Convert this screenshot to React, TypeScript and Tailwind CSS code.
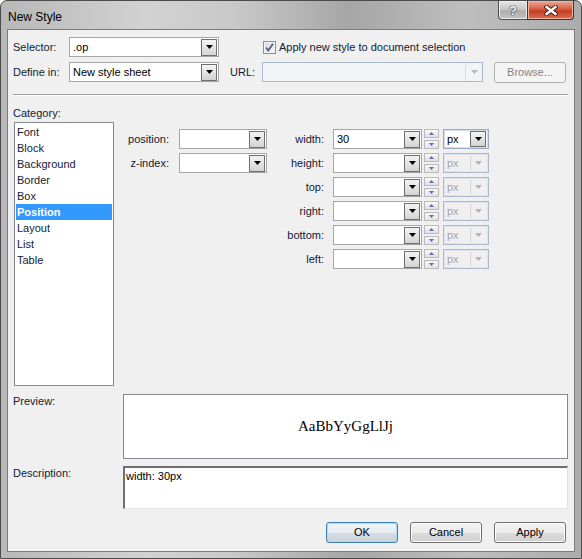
import type { ReactNode } from 'react';

const FONT = "font-['Liberation_Sans',Arial,sans-serif]";

function DownArrow({ color = '#000' }: { color?: string }) {
  return (
    <svg width="7" height="4" viewBox="0 0 7 4">
      <path d="M0 0h7L3.5 4z" fill={color} />
    </svg>
  );
}

function Combo({ className, value }: { className: string; value?: string }) {
  return (
    <div className={`flex h-[20px] items-center border border-[#a5a5a5] bg-white ${className}`}>
      <span className="flex-1 truncate pl-[3px] text-[11px] text-black">{value}</span>
      <span className="mr-[1px] flex h-[17px] w-[16px] items-center justify-center border border-[#6e6e6e] bg-gradient-to-b from-[#f4f4f4] to-[#d3d3d3]">
        <DownArrow />
      </span>
    </div>
  );
}

function DisabledCombo({ className }: { className: string }) {
  return (
    <div className={`flex h-[20px] items-stretch border border-[#abb9ce] bg-[#f2f4f7] ${className}`}>
      <span className="flex-1" />
      <span className="flex w-[17px] items-center justify-center border-l border-[#d9dee6]">
        <DownArrow color="#b9b9b9" />
      </span>
    </div>
  );
}

function UnitCombo({ enabled }: { enabled?: boolean }) {
  if (enabled) {
    return (
      <div className="ml-[4px] flex h-[20px] w-[46px] items-center border border-[#98aac6] bg-white shadow-[inset_0_0_0_1px_#d4deeb]">
        <span className="flex-1 pl-[3px] text-[11px] text-black">px</span>
        <span className="mr-[2px] flex h-[16px] w-[16px] items-center justify-center border border-[#6e6e6e] bg-gradient-to-b from-[#f4f4f4] to-[#d3d3d3]">
          <DownArrow />
        </span>
      </div>
    );
  }
  return (
    <div className="ml-[4px] flex h-[20px] w-[46px] items-stretch border border-[#a9b8cd] bg-[#f0f0f0] shadow-[inset_0_0_0_1px_#dfe5ee]">
      <span className="flex flex-1 items-center pl-[3px] text-[11px] text-[#a3a3a3]">px</span>
      <span className="my-[2px] mr-[2px] flex w-[16px] items-center justify-center border-l border-[#d5d5d5]">
        <DownArrow color="#b5b5b5" />
      </span>
    </div>
  );
}

function Spinner() {
  const half = 'flex h-[9px] w-[15px] items-center justify-center border border-[#b9b9b9] bg-gradient-to-b from-[#f8f8f8] to-[#e2e2e2]';
  return (
    <div className="ml-[2px] flex h-[20px] flex-col justify-between">
      <span className={half}>
        <svg width="5" height="3" viewBox="0 0 5 3">
          <path d="M0 3h5L2.5 0z" fill="#5b6cae" />
        </svg>
      </span>
      <span className={half}>
        <svg width="5" height="3" viewBox="0 0 5 3">
          <path d="M0 0h5L2.5 3z" fill="#5b6cae" />
        </svg>
      </span>
    </div>
  );
}

function Button({ children, primary, disabled }: { children: ReactNode; primary?: boolean; disabled?: boolean }) {
  let look =
    'border-[#707070] bg-[linear-gradient(#f2f2f2,#ebebeb_50%,#dddddd_50%,#cfcfcf)] text-black shadow-[inset_0_0_0_1px_#fbfbfb]';
  if (primary)
    look =
      'border-[#3c7fb1] bg-[linear-gradient(#eef3f6,#e6ecf0_50%,#d6dde2_50%,#cbd2d8)] text-black shadow-[inset_0_0_0_1px_#a9dcf5]';
  if (disabled) look = 'border-[#adb2b5] bg-[#f4f4f4] text-[#838383]';
  return (
    <div className={`flex h-[21px] w-[72px] items-center justify-center rounded-[3px] border text-[11px] ${look}`}>
      {children}
    </div>
  );
}

const categories = ['Font', 'Block', 'Background', 'Border', 'Box', 'Position', 'Layout', 'List', 'Table'];
const boxRows = ['width:', 'height:', 'top:', 'right:', 'bottom:', 'left:'];

export default function App() {
  const label = 'text-[11px] text-[#131a33]';

  return (
    <div className={`${FONT} flex h-[559px] w-[582px] flex-col rounded-t-[7px] border border-[#4b4b4b] bg-[linear-gradient(90deg,#b8b8b8,#d2d2d2_25%,#c9c9c9_40%,#a6a6a6_60%,#bebebe_80%,#acacac)]`}>
      {/* title bar */}
      <div className="flex h-[28px] items-start pl-[7px] pr-[7px]">
        <span className="mt-[7px] text-[12px] text-black">New Style</span>
        <div className="ml-auto flex h-[19px]">
          <div className="flex w-[29px] items-center justify-center rounded-bl-[4px] border border-t-0 border-r-0 border-[#4e4e4e] bg-[linear-gradient(#e4e4e4,#c9c9c9_45%,#aeaeae_55%,#c2c2c2)] shadow-[inset_0_0_0_1px_#eeeeee]">
            <span className="text-[13px] font-bold leading-none text-white [text-shadow:0_0_1px_#222,0_0_1px_#222,0_0_1px_#222]">?</span>
          </div>
          <div className="flex w-[47px] items-center justify-center rounded-br-[4px] border border-t-0 border-[#4e2a22] bg-[linear-gradient(#e9ab98,#d75d43_45%,#c53c22_55%,#d8704f)] shadow-[inset_0_0_0_1px_#f0b4a2]">
            <svg width="14" height="11" viewBox="0 0 14 11">
              <path d="M2.5 2 L11.5 9 M11.5 2 L2.5 9" stroke="#3a1a14" strokeWidth="4.2" strokeLinecap="square" />
              <path d="M2.5 2 L11.5 9 M11.5 2 L2.5 9" stroke="#fff" strokeWidth="2.4" strokeLinecap="square" />
            </svg>
          </div>
        </div>
      </div>

      {/* client area */}
      <div className="mx-[6px] mb-[6px] flex flex-1 flex-col border border-[#7b7b7b] bg-[#f0f0f0]">
        <div className="mt-[7px] flex h-[20px] items-center">
          <span className={`ml-[5px] w-[56px] ${label}`}>Selector:</span>
          <Combo className="w-[150px]" value=".op" />
          <div className="ml-[44px] flex items-center gap-[3px]">
            <span className="flex h-[13px] w-[13px] items-center justify-center border border-[#8e8f8f] bg-gradient-to-br from-[#dcdcdc] to-[#f6f6f6] shadow-[inset_0_0_0_1px_#f4f4f4]">
              <svg width="11" height="11" viewBox="0 0 11 11">
                <path d="M2 5.5 L4.3 8.5 L9 1.8" fill="none" stroke="#4a5f8d" strokeWidth="1.8" />
              </svg>
            </span>
            <span className={label}>Apply new style to document selection</span>
          </div>
        </div>

        <div className="mt-[5px] flex h-[20px] items-center">
          <span className={`ml-[5px] w-[56px] ${label}`}>Define in:</span>
          <Combo className="w-[150px]" value="New style sheet" />
          <span className={`ml-[11px] w-[32px] ${label}`}>URL:</span>
          <DisabledCombo className="w-[221px]" />
          <div className="ml-[11px]">
            <Button disabled>Browse...</Button>
          </div>
        </div>

        <div className="ml-[5px] mt-[12px] w-[555px] border-t border-b border-t-[#a0a0a0] border-b-white" />

        <span className={`ml-[5px] mt-[10px] h-[15px] leading-[15px] ${label}`}>Category:</span>

        <div className="mt-[1px] flex h-[264px] items-start">
          <div className="ml-[6px] flex h-[264px] w-[100px] flex-col border border-[#828790] bg-white pt-[1px]">
            {categories.map((c) => (
              <div
                key={c}
                className={`mx-[1px] flex h-[16px] items-center px-[1px] text-[11px] ${
                  c === 'Position' ? 'bg-[#3399ff] font-bold text-white' : 'text-[#131a33]'
                }`}
              >
                {c}
              </div>
            ))}
          </div>

          <div className="mt-[7px] flex flex-col gap-[4px]">
            {['position:', 'z-index:'].map((l) => (
              <div key={l} className="flex h-[20px] items-center">
                <span className={`w-[55px] text-right ${label}`}>{l}</span>
                <Combo className="ml-[10px] w-[88px]" />
              </div>
            ))}
          </div>

          <div className="mt-[7px] flex flex-col gap-[4px]">
            {boxRows.map((l, i) => (
              <div key={l} className="flex h-[20px] items-center">
                <span className={`w-[57px] text-right ${label}`}>{l}</span>
                <Combo className="ml-[9px] w-[89px]" value={i === 0 ? '30' : undefined} />
                <Spinner />
                <UnitCombo enabled={i === 0} />
              </div>
            ))}
          </div>
        </div>

        <div className="mt-[8px] flex">
          <span className={`ml-[5px] w-[110px] leading-[14px] ${label}`}>Preview:</span>
          <div className="flex h-[65px] w-[445px] items-center justify-center border border-[#828790] bg-white">
            <span className="font-['Liberation_Serif','Times_New_Roman',serif] text-[15px] text-black">AaBbYyGgLlJj</span>
          </div>
        </div>

        <div className="mt-[7px] flex">
          <span className={`ml-[5px] w-[110px] leading-[14px] ${label}`}>Description:</span>
          <div className="h-[43px] w-[445px] border-t-2 border-l-2 border-r border-b border-t-[#6f6f6f] border-l-[#6f6f6f] border-r-[#e3e3e3] border-b-[#e3e3e3] bg-white pl-[1px] pt-[1px]">
            <span className="block text-[11px] leading-[14px] text-black">width: 30px</span>
          </div>
        </div>

        <div className="mt-[13px] flex justify-end gap-[12px] pr-[8px]">
          <Button primary>OK</Button>
          <Button>Cancel</Button>
          <Button>Apply</Button>
        </div>
      </div>
    </div>
  );
}
